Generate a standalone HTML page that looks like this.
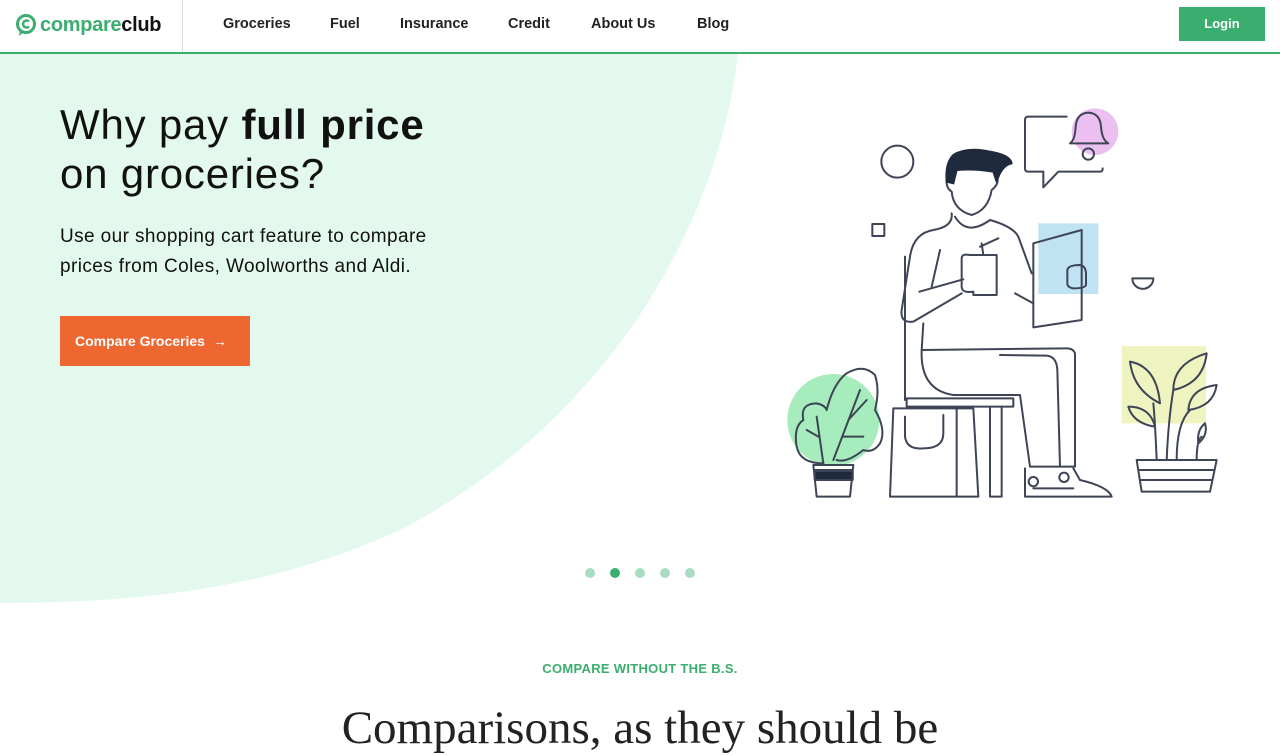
<!DOCTYPE html>
<html><head><meta charset="utf-8"><style>
*{margin:0;padding:0;box-sizing:border-box}
body{width:1280px;height:720px;overflow:hidden;background:#fff;font-family:"Liberation Sans",sans-serif;position:relative;color:#111}
.nav{position:absolute;top:0;left:0;width:1280px;height:54px;background:#fff;border-bottom:2px solid #3aae6f;z-index:5}
.logo{position:absolute;left:15px;top:13px;display:flex;align-items:center;font-size:20px;font-weight:bold;letter-spacing:-0.3px}
.sep{position:absolute;left:182px;top:0;width:1px;height:52px;background:#ddd}
.links{position:absolute;left:223px;top:16px;font-size:14.5px;font-weight:bold;color:#222}
.links span{position:absolute;white-space:nowrap}
.login{position:absolute;left:1179px;top:7px;width:86px;height:34px;background:#3aae6f;color:#fff;font-size:13px;font-weight:bold;text-align:center;line-height:34px}
h1{position:absolute;left:60px;top:100px;font-size:42px;font-weight:normal;line-height:49px;color:#111;letter-spacing:0.8px}
.sub{position:absolute;left:60px;top:222px;font-size:19px;line-height:30px;color:#111;letter-spacing:0.4px}
.btn{position:absolute;left:60px;top:316px;width:190px;height:50px;background:#ee6630;color:#fff;font-size:14px;font-weight:bold;line-height:50px;padding-left:15px}
.dots{position:absolute;top:568px;left:585px}
.dots i{position:absolute;width:10px;height:10px;border-radius:50%;background:#a9dcc0;top:0}
.eyebrow{position:absolute;top:661px;width:1280px;text-align:center;color:#3aae6f;font-size:13px;font-weight:bold;letter-spacing:0.3px}
.h2{position:absolute;top:701px;width:1280px;text-align:center;font-family:"Liberation Serif",serif;font-size:47px;color:#222}
</style></head><body>
<svg style="position:absolute;left:0;top:0" width="1280" height="720"><path d="M0,53 L738,53 C720,220 610,420 400,530 C260,595 110,603 0,603 Z" fill="#e3f9ee"/></svg>
<div class="nav">
<div class="logo"><svg width="22" height="24" viewBox="0 0 22 24" style="margin-right:3px"><circle cx="11" cy="11" r="8.5" fill="none" stroke="#3aae6f" stroke-width="3"/><path d="M14 8.5a3.5 3.5 0 1 0 0 5" fill="none" stroke="#3aae6f" stroke-width="2.5"/><path d="M5 17 L4 23 L9 19" fill="#3aae6f"/></svg><span style="color:#3aae6f">compare</span><span style="color:#111">club</span></div>
<div class="sep"></div>
<div class="links"><span style="left:0">Groceries</span><span style="left:107px">Fuel</span><span style="left:177px">Insurance</span><span style="left:285px">Credit</span><span style="left:368px">About Us</span><span style="left:474px">Blog</span></div>
<div class="login">Login</div>
</div>
<h1>Why pay <b>full price</b><br>on groceries?</h1>
<div class="sub">Use our shopping cart feature to compare<br>prices from Coles, Woolworths and Aldi.</div>
<div class="btn">Compare Groceries &nbsp;→</div>
<svg style="position:absolute;left:780px;top:90px" width="450" height="420" viewBox="0 0 1350 1260" fill="none" stroke="#3d4556" stroke-width="6" stroke-linecap="round" stroke-linejoin="round">
<circle cx="945" cy="125" r="70" fill="#ebc0f0" stroke="none"/>
<rect x="775" y="400" width="180" height="212" fill="#bfe3f3" stroke="none"/>
<rect x="1025" y="768" width="253" height="232" fill="#eef3c0" stroke="none"/>
<circle cx="160" cy="990" r="138" fill="#a6ecbc" stroke="none"/>
<circle cx="352" cy="215" r="48"/>
<rect x="277" y="402" width="36" height="36"/>
<path d="M860,80 H745 Q735,80 735,90 V235 Q735,245 745,245 H790 V292 L835,245 H960 Q968,245 968,235"/>
<path d="M870,160 Q885,150 887,110 Q890,70 925,68 Q960,70 963,110 Q966,150 985,160 Z"/>
<circle cx="925" cy="192" r="17"/>
<path d="M1057,565 H1120 A31,31 0 0 1 1057,565 Z"/>
<path d="M505,240 Q490,290 515,305 Q520,360 575,375 Q625,360 635,300 Q660,280 650,260"/>
<path d="M500,275 Q495,220 520,195 Q560,170 630,185 Q690,195 695,220 Q665,225 650,275 L640,245 Q580,235 530,240 L520,280 Z" fill="#1f2a3c" stroke="#1f2a3c"/>
<path d="M515,370 Q520,410 460,420 Q400,430 390,500 L365,660 Q360,700 400,695 L545,610"/>
<path d="M525,380 Q560,440 630,390 Q700,410 715,440 L755,550 M705,610 L760,640"/>
<path d="M480,480 L455,590 M418,605 L550,568"/>
<path d="M545,505 Q545,490 570,495 L650,495 V615 L580,615 V605 Q545,610 545,590 Z"/>
<path d="M600,470 L655,445 M610,495 L605,460"/>
<path d="M760,460 L905,420 V690 L760,712 Z"/>
<path d="M862,540 Q865,525 900,525 Q920,528 918,560 V585 Q915,595 880,595 Q862,592 862,580 Z"/>
<path d="M430,700 L425,780 Q420,900 520,915 L720,915 L750,1130 L885,1130 L885,790 Q880,775 860,775 L425,780"/>
<path d="M660,795 L800,797 Q830,800 832,840 L840,1130"/>
<path d="M375,500 V930 M380,925 H700 V950 H380 Z M630,950 V1220 H665 V950"/>
<path d="M340,955 H580 L595,1220 H330 Z M530,955 V1220 M375,980 V1040 Q380,1080 430,1075 Q490,1075 490,1030 V975"/>
<path d="M735,1135 V1220 H995 Q985,1190 900,1170 L880,1135 M760,1195 H880"/>
<circle cx="760" cy="1175" r="14"/><circle cx="852" cy="1162" r="14"/>
<path d="M100,1125 H220 L210,1220 H110 Z M105,1140 H218 V1170 H106 Z" fill="none"/>
<rect x="104" y="1143" width="114" height="27" fill="#1f2a3c"/>
<path d="M130,1120 Q60,1120 50,1070 Q40,1010 70,990 Q60,940 110,940 Q135,945 140,960 Q160,880 200,850 Q250,820 285,855 Q300,900 285,960 Q320,1020 300,1060 Q280,1090 250,1080 Q200,1120 170,1110"/>
<path d="M110,980 L130,1120 M80,1020 L115,1040 M160,1110 L240,900 M190,1040 L250,1040 M205,990 L260,930"/>
<path d="M1070,1110 H1310 L1290,1205 H1085 Z M1078,1140 H1302 M1083,1170 H1296"/>
<path d="M1130,1110 Q1125,990 1120,940 M1160,1110 Q1165,990 1180,900 M1190,1110 Q1190,1000 1230,960 M1250,1110 Q1250,1050 1265,1040"/>
<path d="M1050,815 Q1130,830 1140,940 Q1060,900 1050,815 Z M1280,790 Q1180,820 1180,900 Q1270,880 1280,790 Z M1310,885 Q1230,895 1225,960 Q1300,950 1310,885 Z M1045,950 Q1110,950 1125,1010 Q1060,1000 1045,950 Z M1275,1000 Q1250,1020 1255,1060 Q1285,1035 1275,1000 Z"/>
</svg>
<div class="dots"><i style="left:0"></i><i style="left:25px;background:#3aae6f"></i><i style="left:50px"></i><i style="left:75px"></i><i style="left:100px"></i></div>
<div class="eyebrow">COMPARE WITHOUT THE B.S.</div>
<div class="h2">Comparisons, as they should be</div>
</body></html>
